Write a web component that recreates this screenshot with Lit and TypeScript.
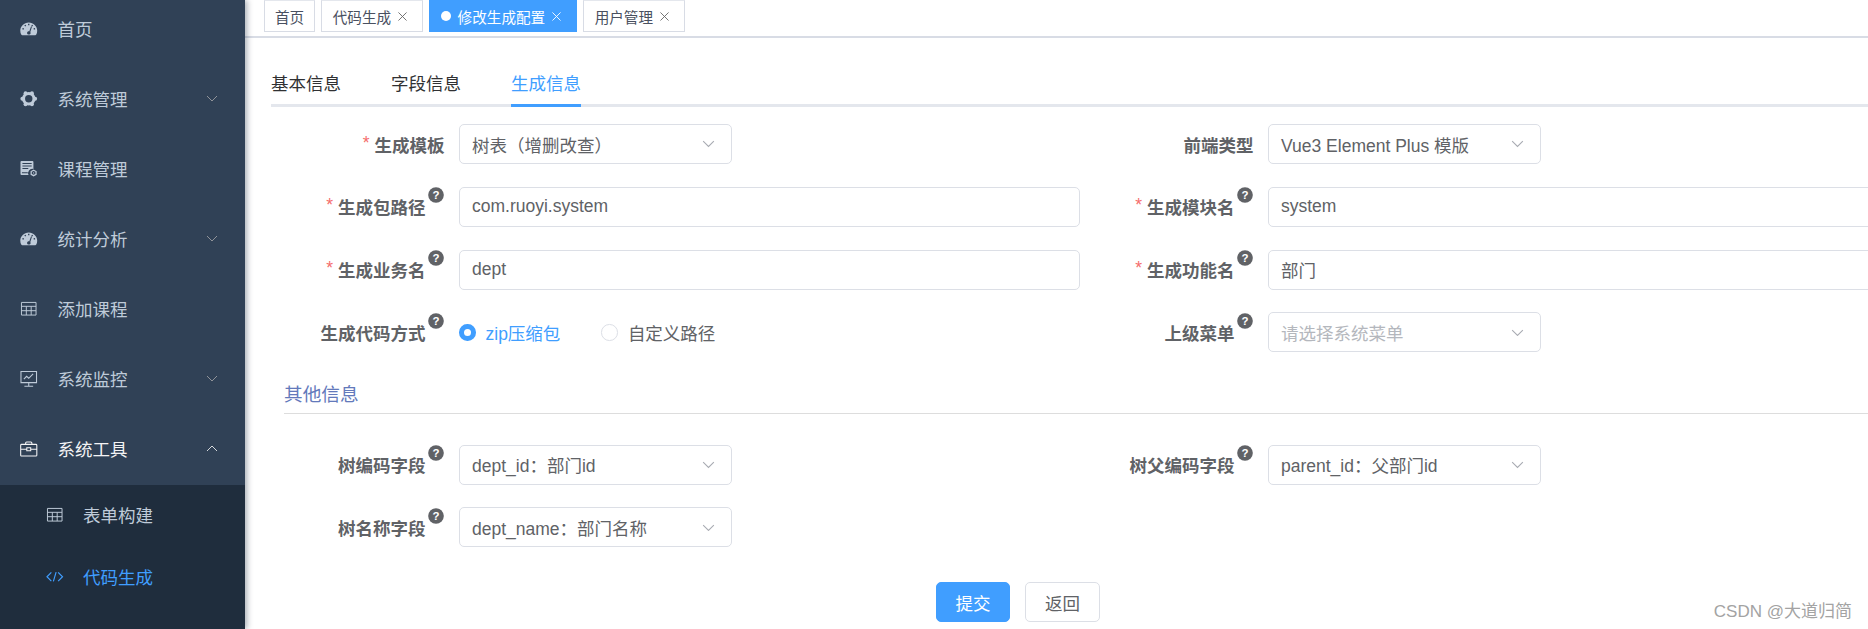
import { LitElement, html, css, svg } from "lit";
import { customElement } from "lit/decorators.js";

const lobes = [0, 60, 120, 180, 240, 300].map((a) => {
  const r = (a * Math.PI) / 180;
  return svg`<circle cx=${(9 + 6.6 * Math.cos(r)).toFixed(2)} cy=${(9 + 6.6 * Math.sin(r)).toFixed(2)} r="2"/>`;
});

const icons: Record<string, unknown> = {
  gauge: svg`<path fill-rule="evenodd" d="M9 2.500C4.200 2.500.300 6.300.300 11c0 1.600.4 3 1.100 4.200.2.300.5.500.9.500h13.400c.4 0 .7-.2.9-.5.7-1.200 1.100-2.600 1.100-4.200 0-4.700-3.900-8.500-8.700-8.500zM4.500 5.500l1.100-.7.8 1.200-1.100.7zM2.300 9.500l.4-1.300 1.400.4-.4 1.300zM8.300 3.900h1.400v1.500H8.300zM12.400 4.800l1.100.7-.8 1.200-1.100-.7zM15.300 8.200l.4 1.300-1.400.4-.4-1.300zM11.400 6.500l.9.4-1.700 5.500c.2.300.3.600.3.900 0 1-.8 1.700-1.800 1.700s-1.800-.7-1.800-1.700.8-1.700 1.800-1.700c.1 0 .3 0 .4.100z"/>`,
  gear: svg`${lobes}<circle cx="9" cy="9" r="5.400" fill="none" stroke="currentColor" stroke-width="3.200"/>`,
  server: svg`<path fill-rule="evenodd" d="M1.500 1h11.300c.6 0 1 .4 1 1v7.200a4.400 4.400 0 0 0-5 6.300H1.500c-.6 0-1-.4-1-1V2c0-.6.4-1 1-1zM2.500 3.200v1h9.500v-1zM2.500 5.700v1h9.500v-1zM2.500 8.200v1h6v-1zM2 12.500v1h6v-1z"/><path fill="none" stroke="currentColor" stroke-width="1.300" d="M14 10.500l2.500 1.400v2.800L14 16.100l-2.500-1.400v-2.800z"/><circle cx="14" cy="13.300" r=".7"/>`,
  table: svg`<path fill="none" stroke="currentColor" stroke-width="1" d="M1.500 2.500h15v13h-15zM1.500 6.500h15M1.500 11h15M6.500 6.500v9M11.500 6.500v9"/>`,
  monitor: svg`<path fill="none" stroke="currentColor" stroke-width="1.100" d="M1 1.500h16v11.500H1zM9 13v3.500M4.500 16.800h9"/><path fill="none" stroke="currentColor" stroke-width="1.100" d="M4 9.500l2.800-3 2.200 2 4.500-4.500"/>`,
  box: svg`<path fill="none" stroke="currentColor" stroke-width="1.100" d="M1.600 4.500h14.800c.5 0 .9.400.9.900v10.200c0 .5-.4.900-.9.900H1.600c-.5 0-.9-.4-.9-.9V5.400c0-.5.4-.9.900-.9zM5.800 4.500V3c0-.6.400-1 1-1h4.400c.6 0 1 .4 1 1v1.500M.7 9.500h6.300M11 9.500h6.300M7 8h4v3H7z"/>`,
  code: svg`<path fill="none" stroke="currentColor" stroke-width="1.200" d="M5.500 4.500L1 9l4.500 4.500M12.500 4.500L17 9l-4.500 4.500M10.400 4.200l-2.800 9.600"/>`,
};

const icon = (n: string) =>
  html`<svg class="ic" viewBox="0 0 18 18" fill="currentColor">${icons[n]}</svg>`;

const chev = (up = false) =>
  html`<svg class="chev" viewBox="0 0 12 7" fill="none" stroke="currentColor" stroke-width="1"><path d=${up ? "M1 6l5-5 5 5" : "M1 1l5 5 5-5"} /></svg>`;

const help = html`<svg class="help" viewBox="0 0 16 16"><circle cx="8" cy="8" r="7.800" fill="#606266"/><text x="8" y="12" text-anchor="middle" font-size="11.500" font-weight="700" fill="#fff" font-family="Liberation Sans">?</text></svg>`;

const close = html`<svg class="x" viewBox="0 0 10 10" fill="none" stroke="currentColor" stroke-width="1"><path d="M.5.500l9 9M9.500.500l-9 9"/></svg>`;

interface Field {
  label: string;
  req?: boolean;
  help?: boolean;
  kind: "select" | "input" | "radio" | "none";
  value?: string;
  placeholder?: boolean;
}

@customElement("app-root")
export class AppRoot extends LitElement {
  static styles = css`
    :host {
      display: block;
      width: 1868px;
      height: 629px;
      overflow: hidden;
      background: #fff;
      font-family: "Liberation Sans", "Noto Sans CJK SC", sans-serif;
      font-size: 17.5px;
      color: #606266;
    }
    .app { display: flex; height: 629px; position: relative; }
    .side {
      flex: 0 0 245px;
      background: #304156;
      box-shadow: 2px 0 6px rgba(0, 21, 41, 0.35);
      position: relative;
      z-index: 2;
      color: #bfcbd9;
      display: flex;
      flex-direction: column;
    }
    .mi {
      height: 70px;
      box-sizing: border-box;
      flex: none;
      display: flex;
      align-items: center;
      padding: 0 27px 3px 20px;
    }
    .mi:first-child { margin-top: -5px; }
    .mi .ic { margin-right: 20px; }
    .mi span { flex: 1; }
    .ic { width: 17.500px; height: 17.500px; flex: none; }
    .chev { width: 12px; height: 7px; flex: none; color: #909399; }
    .mi.open { color: #f4f4f5; }
    .mi.open .chev { color: #d5d8dc; }
    .sub { background: #1f2d3d; flex: 1; }
    .si {
      height: 62px;
      box-sizing: border-box;
      display: flex;
      align-items: center;
      padding: 0 0 3px 46px;
    }
    .si .ic { margin-right: 19.500px; }
    .si.on { color: #409eff; }
    .main { flex: 1; min-width: 0; display: flex; flex-direction: column; overflow: hidden; }
    .tags {
      height: 36px;
      flex: none;
      display: flex;
      gap: 6px;
      padding-left: 19px;
      border-bottom: 2px solid #d8dce5;
      box-sizing: content-box;
    }
    .tag {
      height: 32px;
      box-sizing: border-box;
      border: 1px solid #d8dce5;
      border-top-color: #e4e7ed;
      display: flex;
      align-items: center;
      padding: 0 15px 0 10.500px;
      font-size: 14.600px;
      color: #495060;
      background: #fff;
    }
    .tag:first-child { padding: 0 10px; }
    .tag .x { width: 9px; height: 9px; margin-left: 7px; color: #666; }
    .tag.on {
      background: #409eff;
      border-color: #409eff;
      color: #fff;
    }
    .tag.on .x { color: #fff; }
    .dot { width: 10px; height: 10px; border-radius: 50%; background: #fff; margin-right: 7px; }
    .body { flex: 1; padding: 0 0 0 26px; position: relative; }
    .nav {
      display: flex;
      gap: 50px;
      height: 63px;
      margin-top: 3px;
      border-bottom: 3px solid #e4e7ed;
      box-sizing: content-box;
      color: #303133;
    }
    .nav div {
      height: 66px;
      box-sizing: border-box;
      padding-top: 30px;
      line-height: 26px;
    }
    .nav div.on { color: #409eff; border-bottom: 3px solid #409eff; }
    .grid {
      display: grid;
      grid-template-columns: 809px 809px;
      row-gap: 22.800px;
      margin-top: 17px;
    }
    .grid.second { margin-top: 31px; row-gap: 22.500px; }
    .row { display: flex; align-items: center; height: 40px; }
    .label {
      width: 188px;
      flex: none;
      display: flex;
      justify-content: flex-end;
      align-items: center;
      padding-right: 14.500px;
      box-sizing: border-box;
      font-weight: 700;
      white-space: nowrap;
      position: relative;
    }
    .label.has-help { padding-right: 15.500px; }
    .star { color: #f56c6c; font-weight: 400; margin-right: 5px; position: relative; top: -1px; }
    .help { width: 16px; height: 16px; margin-left: 2px; align-self: flex-start; margin-top: -7px; flex: none; }
    .ctl {
      height: 40px;
      box-sizing: border-box;
      border: 1.500px solid #dcdfe6;
      border-radius: 5px;
      display: flex;
      align-items: center;
      padding: 0 16px 0 12px;
      white-space: nowrap;
    }
    .ctl.select { width: 273px; }
    .ctl.input { width: 621px; }
    .ctl span { flex: 1; }
    .ctl .chev { width: 13px; height: 7.500px; color: #a8abb2; }
    .ph { color: #b4b7bd; }
    .radios { display: flex; align-items: center; }
    .r { display: flex; align-items: center; gap: 10px; margin-right: 41px; }
    .r i {
      width: 16.500px;
      height: 16.500px;
      box-sizing: border-box;
      border-radius: 50%;
      border: 1.500px solid #dcdfe6;
      display: block;
      flex: none;
    }
    .r.on { color: #409eff; }
    .r.on i { background: #409eff; border: 5.500px solid #409eff; position: relative; }
    .r.on i::after {
      content: "";
      position: absolute;
      inset: -0.500px;
      border-radius: 50%;
      background: #fff;
    }
    h4 {
      margin: 29px 0 0 13px;
      padding: 0 0 4.500px 0;
      height: 27px;
      line-height: 27px;
      font-size: 18.670px;
      font-weight: 400;
      color: #6379bb;
      border-bottom: 1.500px solid #ddd;
      box-sizing: content-box;
    }
    .btns { display: flex; margin-top: 35px; padding-left: 665px; gap: 15px; }
    .btn {
      height: 40px;
      width: 74px;
      box-sizing: border-box;
      border: 1.500px solid #dcdfe6;
      border-radius: 5px;
      display: flex;
      align-items: center;
      justify-content: center;
      background: #fff;
    }
    .btn.pri { background: #409eff; border-color: #409eff; color: #fff; }
    .btn:not(.pri) { width: 75px; }
    .mark {
      position: absolute;
      right: 16px;
      bottom: 7px;
      font-size: 17px;
      color: #a3a3a3;
      z-index: 3;
    }
  `;

  private field(f: Field) {
    return html`<div class="row">
      <div class="label ${f.help ? "has-help" : ""}">
        ${f.req ? html`<span class="star">*</span>` : ""}${f.label}${f.help ? help : ""}
      </div>
      ${f.kind === "select"
        ? html`<div class="ctl select"><span class=${f.placeholder ? "ph" : ""}>${f.value}</span>${chev()}</div>`
        : f.kind === "input"
          ? html`<div class="ctl input"><span>${f.value}</span></div>`
          : f.kind === "radio"
            ? html`<div class="radios">
                <div class="r on"><i></i>zip压缩包</div>
                <div class="r"><i></i>自定义路径</div>
              </div>`
            : ""}
    </div>`;
  }

  render() {
    const menu: [string, string, boolean][] = [
      ["gauge", "首页", false],
      ["gear", "系统管理", true],
      ["server", "课程管理", false],
      ["gauge", "统计分析", true],
      ["table", "添加课程", false],
      ["monitor", "系统监控", true],
    ];
    const f1: Field[] = [
      { label: "生成模板", req: true, kind: "select", value: "树表（增删改查）" },
      { label: "前端类型", kind: "select", value: "Vue3 Element Plus 模版" },
      { label: "生成包路径", req: true, help: true, kind: "input", value: "com.ruoyi.system" },
      { label: "生成模块名", req: true, help: true, kind: "input", value: "system" },
      { label: "生成业务名", req: true, help: true, kind: "input", value: "dept" },
      { label: "生成功能名", req: true, help: true, kind: "input", value: "部门" },
      { label: "生成代码方式", help: true, kind: "radio" },
      { label: "上级菜单", help: true, kind: "select", value: "请选择系统菜单", placeholder: true },
    ];
    const f2: Field[] = [
      { label: "树编码字段", help: true, kind: "select", value: "dept_id：部门id" },
      { label: "树父编码字段", help: true, kind: "select", value: "parent_id：父部门id" },
      { label: "树名称字段", help: true, kind: "select", value: "dept_name：部门名称" },
    ];
    return html`<div class="app">
      <aside class="side">
        ${menu.map(
          ([i, t, c]) => html`<div class="mi">${icon(i)}<span>${t}</span>${c ? chev() : ""}</div>`
        )}
        <div class="mi open">${icon("box")}<span>系统工具</span>${chev(true)}</div>
        <div class="sub">
          <div class="si">${icon("table")}<span>表单构建</span></div>
          <div class="si on">${icon("code")}<span>代码生成</span></div>
        </div>
      </aside>
      <main class="main">
        <div class="tags">
          <div class="tag">首页</div>
          <div class="tag">代码生成${close}</div>
          <div class="tag on"><span class="dot"></span>修改生成配置${close}</div>
          <div class="tag">用户管理${close}</div>
        </div>
        <div class="body">
          <div class="nav">
            <div>基本信息</div>
            <div>字段信息</div>
            <div class="on">生成信息</div>
          </div>
          <div class="grid">${f1.map((f) => this.field(f))}</div>
          <h4>其他信息</h4>
          <div class="grid second">${f2.map((f) => this.field(f))}</div>
          <div class="btns">
            <div class="btn pri">提交</div>
            <div class="btn">返回</div>
          </div>
        </div>
      </main>
      <div class="mark">CSDN @大道归简</div>
    </div>`;
  }
}
